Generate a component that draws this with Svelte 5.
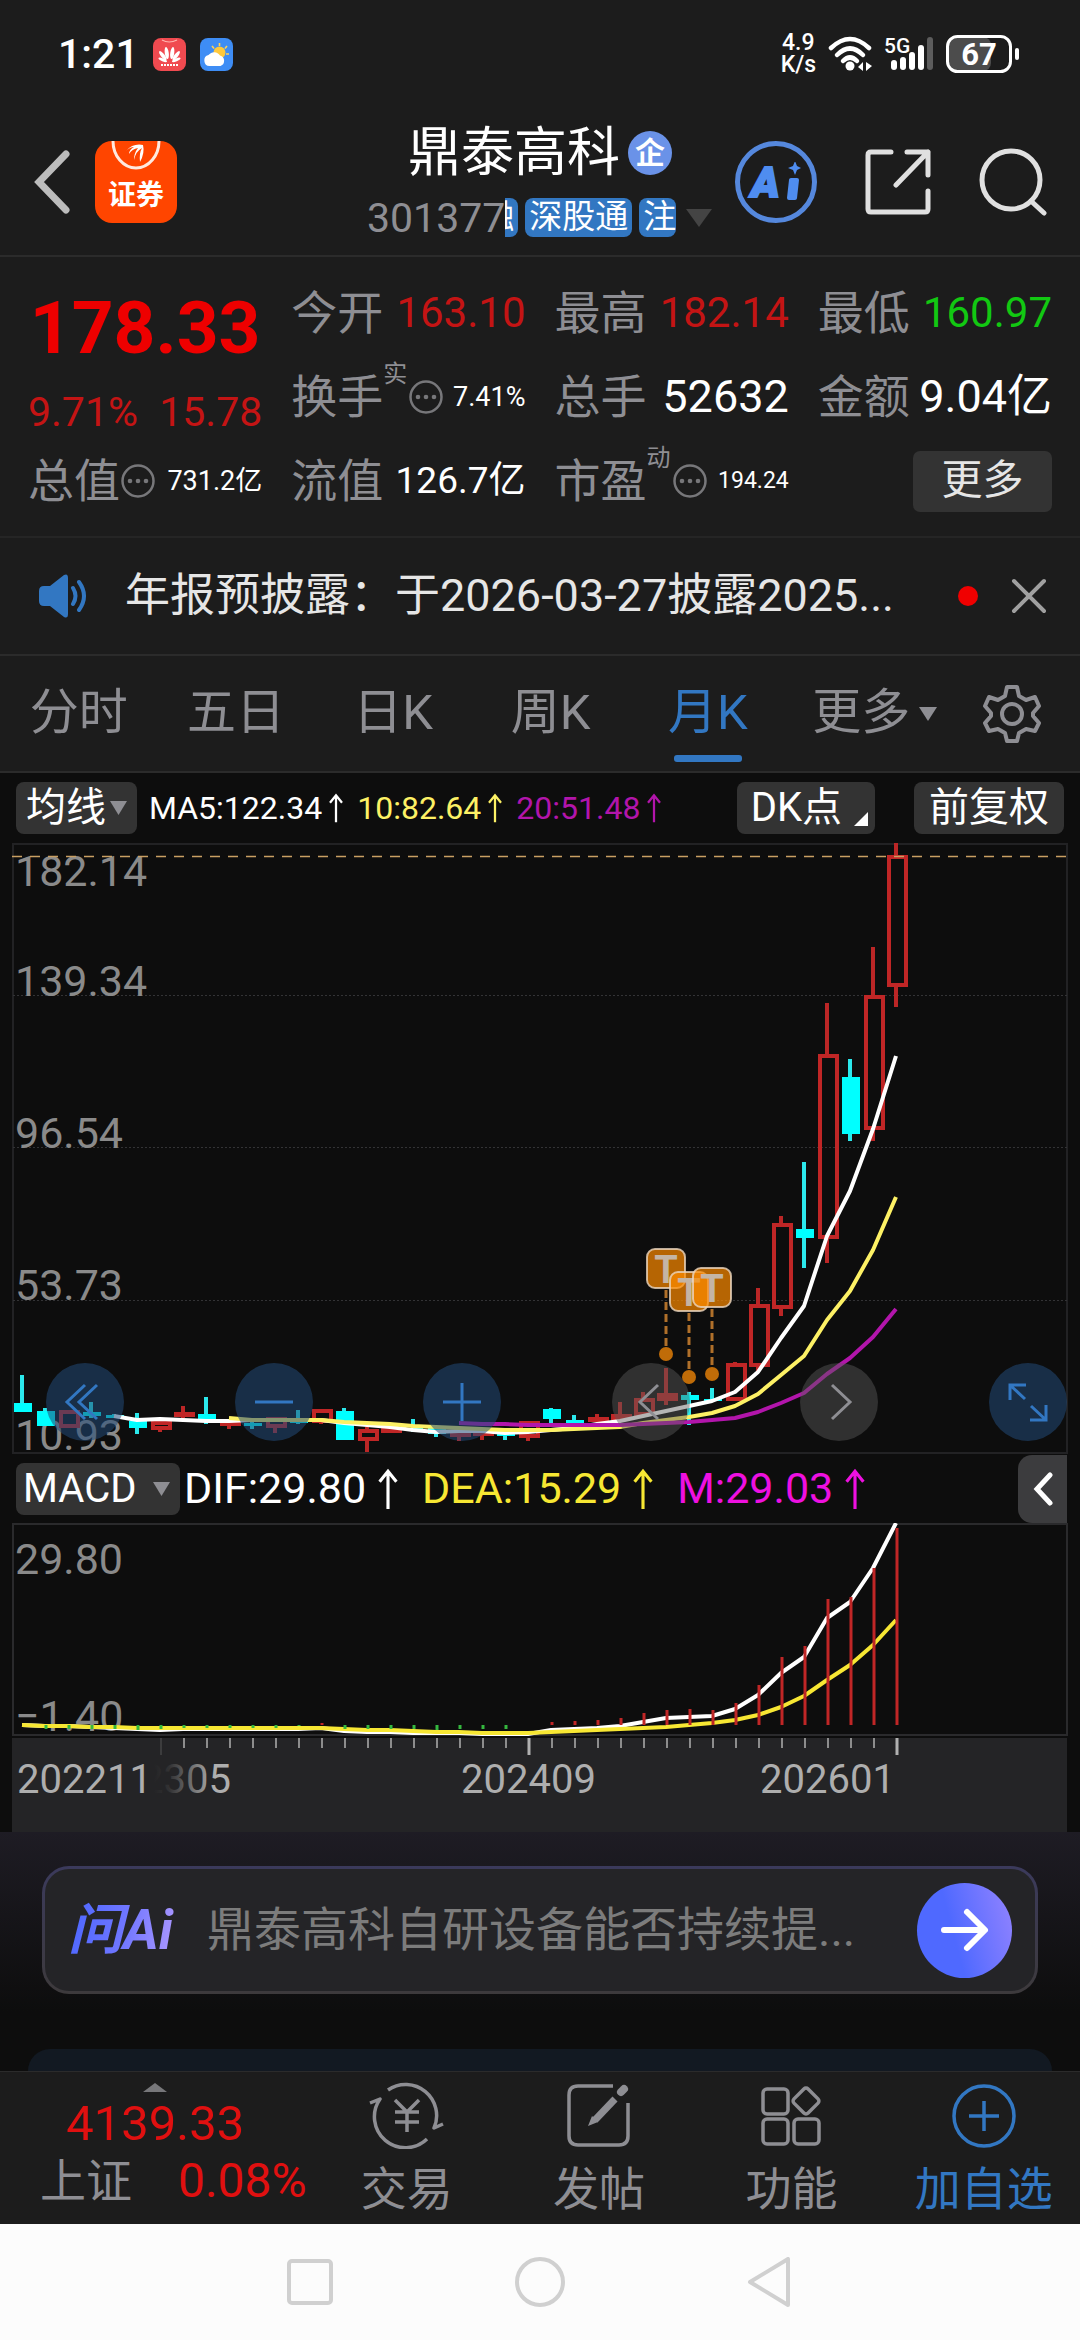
<script>
  const STEP = 23;
  const X0 = 22;
  const cx = (i) => X0 + STEP * i;

  // [direction, high, bodyTop, bodyBottom, low] in chart units
  const candles = [
    ['d', 532, 560, 569, 569], ['d', 565, 568, 583, 583], ['u', 567, 567, 585, 585],
    ['d', 559, 569, 573, 575], ['d', 571, 572, 575, 575], ['d', 570, 578, 585, 591],
    ['u', 578, 578, 587, 589], ['u', 563, 569, 574, 575], ['d', 554, 571, 577, 581],
    ['u', 577, 578, 582, 586], ['d', 578, 580, 583, 586], ['u', 574, 574, 585, 590],
    ['d', 567, 578, 580, 581], ['u', 566, 566, 580, 581], ['d', 565, 568, 597, 597],
    ['u', 584, 586, 598, 609], ['u', 585, 585, 589, 589], ['d', 576, 585, 587, 589],
    ['d', 583, 585, 591, 594], ['u', 586, 587, 594, 598], ['u', 586, 588, 591, 597],
    ['d', 588, 590, 593, 597], ['u', 578, 578, 595, 598], ['d', 565, 566, 576, 581],
    ['d', 572, 577, 580, 581], ['u', 571, 574, 579, 579], ['u', 559, 571, 577, 577],
    ['u', 549, 555, 573, 573], ['u', 525, 550, 558, 562], ['d', 549, 552, 557, 582],
    ['d', 545, 556, 558, 558], ['u', 519, 520, 558, 558], ['u', 445, 461, 524, 529],
    ['u', 373, 380, 466, 473], ['d', 319, 386, 395, 425], ['u', 160, 211, 396, 420],
    ['d', 216, 234, 291, 298], ['u', 104, 152, 287, 298], ['u', 0, 12, 144, 164]
  ];

  const line = (start, ys) => ys.map((y, k) => `${cx(start + k)},${y}`).join(' ');

  const ma5 = line(4, [573, 577, 576, 577, 578, 578, 577, 577, 577, 577, 580, 582, 584, 587, 589, 588, 588, 590, 589, 587, 585, 581, 578, 573, 568, 563, 558, 549, 529, 495, 463, 393, 348, 286, 213]);
  const ma10 = line(9, [575, 577, 577, 577, 577, 579, 580, 581, 583, 584, 585, 586, 587, 587, 587, 586, 585, 584, 580, 577, 574, 570, 563, 551, 532, 513, 477, 448, 407, 354]);
  const ma20 = line(19, [580, 581, 581, 582, 582, 582, 582, 582, 581, 580, 579, 577, 575, 569, 560, 550, 531, 515, 494, 466]);

  const dif = line(0, [202, 203, 203, 204, 205, 206, 207, 206, 206, 206, 206, 206, 206, 205, 208, 209, 209, 210, 210, 210, 211, 211, 211, 207, 206, 205, 203, 199, 195, 194, 193, 186, 172, 150, 134, 95, 79, 45, 0]);
  const dea = line(0, [202, 203, 203, 204, 204, 205, 205, 205, 205, 205, 205, 205, 205, 205, 206, 207, 207, 208, 209, 209, 210, 210, 210, 209, 208, 207, 206, 205, 204, 202, 200, 197, 192, 184, 173, 157, 142, 122, 97]);

  const bars = [
    [13, 200], [23, 199], [24, 198], [25, 197], [26, 195], [27, 190], [28, 187], [29, 186], [30, 187],
    [31, 180], [32, 162], [33, 134], [34, 123], [35, 76], [36, 74], [37, 45], [38, 5]
  ];
  const dips = [
    [1, 4], [2, 4], [3, 4], [4, 4], [5, 5], [6, 4], [7, 3], [8, 3], [9, 3], [10, 3], [11, 3], [12, 1],
    [14, 4], [15, 4], [16, 4], [17, 4], [18, 5], [19, 4], [20, 4], [21, 4]
  ];
  const ticks = Array.from({ length: 33 }, (_, k) => k + 6);

  const prices = [['182.14', 43], ['139.34', 153], ['96.54', 305], ['53.73', 457], ['10.93', 607]];
  const marks = [[28, 406, 511], [29, 429, 534], [30, 425, 531]];
  const tabs = ['分时', '五日', '日K', '周K', '月K'];
</script>

{#snippet up()}
  <svg class="up" viewBox="0 0 20 40" aria-hidden="true"><path d="M10 39V3M2 13l8-10 8 10" /></svg>
{/snippet}

{#snippet dots()}
  <svg class="dots" viewBox="0 0 36 36" aria-hidden="true">
    <circle cx="18" cy="18" r="15.5" fill="none" stroke="#77777a" stroke-width="2.5" />
    <circle cx="10" cy="18" r="2.3" /><circle cx="18" cy="18" r="2.3" /><circle cx="26" cy="18" r="2.3" />
  </svg>
{/snippet}

<div class="screen">
  <div class="status">
    <span class="clock">1:21</span>
    <svg class="mini" viewBox="0 0 33 33" aria-hidden="true">
      <rect width="33" height="33" rx="8" fill="#f04a50" />
      <path d="M9 2q7 4 15 0" fill="none" stroke="#ffb5b0" stroke-width="1.2" />
      <g fill="#fff">
        <ellipse cx="14.6" cy="15" rx="2" ry="6" transform="rotate(-8 14.6 21)" />
        <ellipse cx="18.4" cy="15" rx="2" ry="6" transform="rotate(8 18.4 21)" />
        <ellipse cx="13.4" cy="16" rx="1.9" ry="5.6" transform="rotate(-38 14 22)" />
        <ellipse cx="19.6" cy="16" rx="1.9" ry="5.6" transform="rotate(38 19 22)" />
        <ellipse cx="12.6" cy="18" rx="1.5" ry="4.6" transform="rotate(-68 14 22)" />
        <ellipse cx="20.4" cy="18" rx="1.5" ry="4.6" transform="rotate(68 19 22)" />
      </g>
      <path d="M8 27h17" stroke="#fff" stroke-width="2" stroke-dasharray="2 1" />
    </svg>
    <svg class="mini" viewBox="0 0 33 33" aria-hidden="true">
      <rect width="33" height="33" rx="8" fill="#3e8df5" />
      <path d="M19.500 5v3M12 8l2 2.500M27 8l-2 2.500M26 16h3" stroke="#ffd257" stroke-width="1.6" />
      <circle cx="19.500" cy="14.500" r="6" fill="#ffc93c" />
      <path d="M9.500 28a5.600 5.600 0 0 1-1-11 7 7 0 0 1 11.500 0.500 5.500 5.500 0 0 1 0.500 10.500z" fill="#fff" />
    </svg>
    <span class="speed">4.9<br />K/s</span>
    <svg class="wifi" viewBox="0 0 46 36" aria-hidden="true">
      <g fill="none" stroke="#fff" stroke-width="4.500" stroke-linecap="round">
        <path d="M3 12Q22 -6 41 12" /><path d="M9 19Q22 6 35 19" /><path d="M15 25Q22 18 29 25" />
      </g>
      <circle cx="22" cy="30" r="4.500" fill="#fff" />
      <path d="M35 26v9l-5-4zM38 26v9l6-5z" fill="#fff" />
    </svg>
    <svg class="signal" viewBox="0 0 50 36" aria-hidden="true">
      <text x="0" y="17" font-size="21" font-weight="500" fill="#fff">5G</text>
      <g stroke="#fff" stroke-width="6" stroke-linecap="round">
        <path d="M10 27v4" /><path d="M19 24v7" /><path d="M28 19v12" /><path d="M37 12v19" /><path d="M46 4v27" stroke="#5c5c5c" />
      </g>
    </svg>
    <svg class="battery" viewBox="0 0 74 38" aria-hidden="true">
      <rect x="2" y="2" width="43" height="34" rx="8" fill="#4c4c4c" />
      <rect x="1.500" y="1.500" width="63" height="35" rx="10" fill="none" stroke="#fff" stroke-width="3" />
      <path d="M71 15v8" stroke="#fff" stroke-width="4" stroke-linecap="round" />
      <text x="33" y="30" text-anchor="middle" font-size="31" font-weight="700" fill="#fff">67</text>
    </svg>
  </div>

  <header class="head">
    <div class="head-left">
      <button class="bare" aria-label="返回">
        <svg width="38" height="64" viewBox="0 0 38 64"><path d="M33 4L6 32l27 28" fill="none" stroke="#bcbcbc" stroke-width="7" stroke-linecap="round" /></svg>
      </button>
      <button class="broker" aria-label="证券">
        <svg viewBox="0 0 82 34" aria-hidden="true">
          <path d="M18 0a23 27 0 0 0 46 0" fill="none" stroke="#ffe9df" stroke-width="3" />
          <path d="M31 10Q38 2 48 4q2 8-3 17Q44 12 47 7q-6 3-8 12 0-7 4-12-6 1-9 6 0-4 5-7-4 0-8 4z" fill="#fff" />
        </svg>
        <span>证券</span>
      </button>
    </div>
    <div class="head-mid">
      <h1>鼎泰高科<span class="badge">企</span></h1>
      <div class="code">
        <span class="num">301377</span>
        <span class="chips"><b class="cut">融</b><b>深股通</b><b class="end">注</b></span>
        <svg width="26" height="18" viewBox="0 0 26 18" aria-hidden="true"><path d="M0 0h26L13 18z" fill="#444" /></svg>
      </div>
    </div>
    <div class="head-right">
      <button class="ai" aria-label="AI">
        <span>A</span>
        <svg width="16" height="40" viewBox="0 0 16 40" aria-hidden="true"><path d="M10 -1l2 5 4 2-4 2-2 5-2-5-5-2 5-2z" fill="#4f8df0" /><path d="M6 18h6l-2 18H4z" fill="#4f8df0" stroke="#4f8df0" stroke-width="4" stroke-linejoin="round" /></svg>
      </button>
      <button class="bare" aria-label="分享">
        <svg width="66" height="66" viewBox="0 0 66 66"><path d="M26 3H6q-3 0-3 3v54q0 3 3 3h54q3 0 3-3V42M42 3h21v23M63 3L31 36" fill="none" stroke="#e0e0e0" stroke-width="5" stroke-linecap="round" stroke-linejoin="round" /></svg>
      </button>
      <button class="bare" aria-label="搜索">
        <svg width="68" height="68" viewBox="0 0 68 68"><circle cx="32" cy="32" r="29" fill="none" stroke="#e0e0e0" stroke-width="5" /><path d="M52 53l13 12" stroke="#e0e0e0" stroke-width="5" stroke-linecap="round" /></svg>
      </button>
    </div>
  </header>

  <section class="quote">
    <div class="last">
      <strong>178.33</strong>
      <div><span>9.71%</span><span>15.78</span></div>
    </div>
    <div class="cell"><span class="lab">今开</span><span class="val red">163.10</span></div>
    <div class="cell"><span class="lab">最高</span><span class="val red">182.14</span></div>
    <div class="cell"><span class="lab">最低</span><span class="val green">160.97</span></div>
    <div class="cell"><span class="lab">换手<sup>实</sup></span>{@render dots()}<span class="val small">7.41%</span></div>
    <div class="cell"><span class="lab">总手</span><span class="val big">52632</span></div>
    <div class="cell"><span class="lab">金额</span><span class="val big">9.04亿</span></div>
    <div class="cell"><span class="lab">总值</span>{@render dots()}<span class="val small">731.2亿</span></div>
    <div class="cell"><span class="lab">流值</span><span class="val mid">126.7亿</span></div>
    <div class="cell"><span class="lab">市盈<sup>动</sup></span>{@render dots()}<span class="val tiny">194.24</span></div>
    <div class="cell right"><button class="more">更多</button></div>
  </section>

  <section class="notice">
    <svg width="50" height="44" viewBox="0 0 50 44" aria-hidden="true">
      <path d="M0 17q0-5 5-5h6L25 1q4-2 4 3v36q0 5-4 3L11 32H5q-5 0-5-5z" fill="#3277c2" />
      <path d="M34 14q5 8 0 16M40 8q10 14 0 28" fill="none" stroke="#3277c2" stroke-width="4" stroke-linecap="round" />
    </svg>
    <a href="#notice">年报预披露：于2026-03-27披露2025...</a>
    <i></i>
    <button class="bare" aria-label="关闭">
      <svg width="36" height="36" viewBox="0 0 36 36"><path d="M3 3l30 30M33 3L3 33" stroke="#a0a0a0" stroke-width="4" stroke-linecap="round" /></svg>
    </button>
  </section>

  <nav class="tabs">
    {#each tabs as t}
      <button class:on={t === '月K'}>{t}</button>
    {/each}
    <button>更多<svg width="18" height="14" viewBox="0 0 18 14" aria-hidden="true"><path d="M0 0h18L9 14z" fill="#8e8e93" /></svg></button>
    <button aria-label="设置">
      <svg width="60" height="60" viewBox="0 0 60 60" fill="none" stroke="#8e8e93" stroke-width="4" stroke-linejoin="round">
        <path d="M25 3h10l2 9 7 4 9-3 4 9-6 7v3l6 7-4 8-9-2-7 4-2 8H25l-2-8-7-4-9 2-4-8 6-7v-3l-6-7 4-9 9 3 7-4z" />
        <circle cx="30" cy="30" r="10" />
      </svg>
    </button>
  </nav>

  <section class="charts">
    <div class="bar">
      <button class="pill">均线<svg width="17" height="14" viewBox="0 0 17 14" aria-hidden="true"><path d="M0 0h17L8.500 14z" fill="#8e8e93" /></svg></button>
      <span class="ma white">MA5:122.34{@render up()}</span>
      <span class="ma yellow">10:82.64{@render up()}</span>
      <span class="ma purple">20:51.48{@render up()}</span>
      <button class="pill dk">DK点<svg width="14" height="14" viewBox="0 0 14 14" aria-hidden="true"><path d="M14 0v14H0z" fill="#fff" /></svg></button>
      <button class="pill adj">前复权</button>
    </div>

    <div class="plot">
      <svg viewBox="0 0 1080 611" role="img" aria-label="月K线">
        <g fill="none" stroke="#222224" stroke-width="2"><rect x="13" y="1" width="1054" height="609" /></g>
        <g stroke="#333335" stroke-width="1" stroke-dasharray="2 2"><path d="M13 152.500H1067M13 304.500H1067M13 457.500H1067" /></g>
        {#each prices as [p, y]}
          <text x="15" {y} class="axis">{p}</text>
        {/each}
        {#each candles as [d, hi, top, bot, lo], i}
          {#if d === 'd'}
            <path d="M{cx(i)} {hi}V{lo}" stroke="#2be8ec" stroke-width="4" />
            <rect x={cx(i) - 8} y={top} width="18" height={bot - top} fill="#00ffff" />
          {:else}
            <path d="M{cx(i)} {hi}V{top + 1}M{cx(i)} {bot - 1}V{lo}" stroke="#bb2626" stroke-width="4" />
            <rect x={cx(i) - 7} y={top + 2} width="17" height={Math.max(bot - top - 4, 1)} fill="none" stroke="#c02626" stroke-width="4" />
          {/if}
        {/each}
        <g fill="none" stroke-width="4" stroke-linejoin="round">
          <polyline points={ma5} stroke="#ffffff" />
          <polyline points={ma10} stroke="#fdf165" />
          <polyline points={ma20} stroke="#b215ab" />
        </g>
        <path d="M12 13.500H1067" stroke="#c9a063" stroke-width="1.5" stroke-dasharray="10 8" />
        {#each marks as [i, y, end]}
          <path d="M{cx(i)} {y + 41}V{end}" stroke="#b0702a" stroke-width="3" stroke-dasharray="8 4" />
          <circle cx={cx(i)} cy={end} r="7" fill="#c06c08" />
          <rect x={cx(i) - 19} {y} width="38" height="39" rx="8" fill="#ff8c00" fill-opacity=".7" stroke="#ead6c0" stroke-opacity=".8" stroke-width="2" />
          <text x={cx(i)} y={y + 34} class="tee">T</text>
        {/each}
      </svg>
      <div class="tools">
        <button aria-label="更早"><svg viewBox="0 0 78 78"><path d="M39 22L21 39l18 17M51 22L33 39l18 17" /></svg></button>
        <button aria-label="缩小"><svg viewBox="0 0 78 78"><path d="M20 39h38" /></svg></button>
        <button aria-label="放大"><svg viewBox="0 0 78 78"><path d="M20 39h38M39 20v38" /></svg></button>
        <button class="gray" aria-label="左移"><svg viewBox="0 0 78 78"><path d="M46 22L28 39l18 17" /></svg></button>
        <button class="gray" aria-label="右移"><svg viewBox="0 0 78 78"><path d="M32 22l18 17-18 17" /></svg></button>
        <button aria-label="全屏"><svg viewBox="0 0 78 78"><path d="M36 36L21 22M21 37V22h16M42 43l15 14M57 42v15H41" /></svg></button>
      </div>
    </div>

    <div class="bar macd">
      <button class="pill">MACD<svg width="17" height="14" viewBox="0 0 17 14" aria-hidden="true"><path d="M0 0h17L8.500 14z" fill="#8e8e93" /></svg></button>
      <span class="ind white">DIF:29.80{@render up()}</span>
      <span class="ind dea">DEA:15.29{@render up()}</span>
      <span class="ind mag">M:29.03{@render up()}</span>
      <button class="fold" aria-label="展开"><svg width="20" height="34" viewBox="0 0 20 34"><path d="M17 3L4 17l13 14" fill="none" stroke="#fff" stroke-width="5" stroke-linecap="round" /></svg></button>
    </div>

    <svg class="macd-plot" viewBox="0 0 1080 309" role="img" aria-label="MACD">
      <defs>
        <linearGradient id="fade"><stop offset="0" stop-color="#242426" /><stop offset=".25" stop-color="#242426" stop-opacity=".9" /><stop offset="1" stop-color="#242426" stop-opacity="0" /></linearGradient>
      </defs>
      <rect x="13" y="1" width="1054" height="211" fill="none" stroke="#2a2a2c" stroke-width="2" />
      <text x="15" y="51" class="axis">29.80</text>
      <text x="15" y="208" class="axis">−1.40</text>
      <polyline points={dif} fill="none" stroke="#fff" stroke-width="4" stroke-linejoin="round" />
      <polyline points={dea} fill="none" stroke="#f7e733" stroke-width="4" stroke-linejoin="round" />
      {#each bars as [i, y]}
        <path d="M{cx(i) + 1} {y}V202" stroke="#c02626" stroke-width="3" />
      {/each}
      {#each dips as [i, h]}
        <path d="M{cx(i) + 1} 202v{h}" stroke="#35b83f" stroke-width="3" />
      {/each}
      <rect x="12" y="215" width="1055" height="94" fill="#242426" />
      {#each ticks as i}
        <path d="M{cx(i) + 1} 215v{i === 6 || i === 22 || i === 38 ? 17 : 10}" stroke={i === 6 ? '#444446' : '#b0b0b0'} stroke-width={i === 22 || i === 38 ? 3 : 1.5} />
      {/each}
      <text x="96" y="270" class="date">202305</text>
      <rect x="90" y="236" width="64" height="44" fill="#242426" />
      <rect x="154" y="236" width="60" height="44" fill="url(#fade)" />
      <text x="17" y="270" class="date">202211</text>
      <text x="461" y="270" class="date">202409</text>
      <text x="760" y="270" class="date">202601</text>
    </svg>
  </section>

  <section class="ask">
    <div class="askbox">
      <span class="logo">问Ai</span>
      <a href="#ask">鼎泰高科自研设备能否持续提...</a>
      <button class="go" aria-label="发送"><svg width="50" height="46" viewBox="0 0 50 46"><path d="M4 23h40M27 5l18 18-18 18" fill="none" stroke="#fff" stroke-width="6" stroke-linecap="round" stroke-linejoin="round" /></svg></button>
    </div>
    <div class="peek"></div>
  </section>

  <footer class="dock">
    <button class="index">
      <svg width="24" height="9" viewBox="0 0 24 9" aria-hidden="true"><path d="M0 9L12 0l12 9z" fill="#77777a" /></svg>
      <span class="pts">4139.33</span>
      <span class="row"><span>上证</span><span class="pct">0.08%</span></span>
    </button>
    <button>
      <svg width="76" height="68" viewBox="0 0 76 68" fill="none" stroke="#8e8e93" stroke-width="3.500">
        <path d="M19 9A31 31 0 0 1 65 47l9-4M58 58A31 31 0 0 1 11 18L1 22" stroke-linejoin="round" />
        <path d="M26 19l12 12 12-12M38 31v20M26 31h24M26 41h24" />
      </svg>
      交易
    </button>
    <button>
      <svg width="64" height="68" viewBox="0 0 64 68" fill="none" stroke="#8e8e93" stroke-width="3.500">
        <path d="M46 5H11q-9 0-9 9v41q0 9 9 9h41q9 0 9-9V22" />
        <path d="M28 39L48 18" stroke-width="7" /><path d="M21 45l4-10 6 6z" fill="#8e8e93" stroke="none" />
        <path d="M54 11l3-3" stroke-width="8" stroke-linecap="round" />
      </svg>
      发帖
    </button>
    <button>
      <svg width="62" height="68" viewBox="0 0 62 68" fill="none" stroke="#8e8e93" stroke-width="3.500">
        <rect x="3" y="8" width="25" height="25" rx="4" /><rect x="3" y="38" width="25" height="25" rx="4" /><rect x="34" y="38" width="25" height="25" rx="4" />
        <rect x="36" y="10" width="20" height="20" rx="3" transform="rotate(45 46 20)" />
      </svg>
      功能
    </button>
    <button class="add">
      <svg width="66" height="68" viewBox="0 0 66 68" fill="none" stroke="#3277c2" stroke-width="3.500">
        <circle cx="33" cy="35" r="30" /><path d="M33 20v30M18 35h30" />
      </svg>
      加自选
    </button>
  </footer>

  <nav class="sys">
    <button class="bare" aria-label="最近"><svg width="50" height="50" viewBox="0 0 50 50"><rect x="4" y="4" width="42" height="42" rx="3" /></svg></button>
    <button class="bare" aria-label="主页"><svg width="50" height="50" viewBox="0 0 50 50"><circle cx="25" cy="25" r="23" /></svg></button>
    <button class="bare" aria-label="后退"><svg width="50" height="50" viewBox="0 0 50 50"><path d="M43 2v46L5 25z" stroke-linejoin="round" /></svg></button>
  </nav>
</div>

<style>
  :global(body) { background: #0d0d0d; }
  .screen {
    display: flex;
    flex-direction: column;
    min-height: 100vh;
    background: #1c1c1c;
    color: #e6e6e6;
    font-family: Roboto, "Noto Sans CJK SC", sans-serif;
    line-height: 1.2;
  }
  button {
    display: flex;
    align-items: center;
    justify-content: center;
    margin: 0;
    padding: 0;
    border: 0;
    background: none;
    color: inherit;
    font: inherit;
    white-space: nowrap;
  }
  svg { display: block; flex: none; }
  a { color: inherit; text-decoration: none; white-space: nowrap; }

  .status { display: flex; align-items: center; height: 108px; padding: 0 60px 0 58px; color: #fff; }
  .clock { font-size: 41px; font-weight: 500; line-height: 48px; margin-right: 14px; }
  .mini { width: 33px; height: 33px; margin-right: 14px; }
  .speed { margin-left: auto; font-size: 23px; line-height: 22px; font-weight: 500; text-align: center; }
  .wifi { width: 46px; height: 36px; margin: 0 10px 0 12px; }
  .signal { width: 50px; height: 36px; margin-right: 12px; }
  .battery { width: 74px; height: 38px; }

  .head {
    display: grid;
    grid-template-columns: 1fr 346px 1fr;
    align-items: center;
    height: 147px;
    border-bottom: 2px solid #2b2b2b;
  }
  .head-left { display: flex; align-items: center; gap: 24px; padding-left: 33px; }
  .broker { flex-direction: column; justify-content: flex-start; width: 82px; height: 82px; border-radius: 17px; background: #ff4500; overflow: hidden; }
  .broker svg { width: 82px; height: 34px; }
  .broker span { font-family: "Noto Sans CJK SC", sans-serif; font-size: 28px; font-weight: 700; line-height: 36px; color: #fff; }
  .head-mid { display: flex; flex-direction: column; align-items: center; }
  h1 { display: flex; align-items: center; gap: 8px; margin: 0; font-size: 53px; font-weight: 400; line-height: 72px; color: #fff; }
  .badge { width: 44px; height: 44px; border-radius: 50%; background: #6a92e8; font-size: 30px; font-weight: 700; line-height: 43px; text-align: center; }
  .code { display: flex; align-items: center; width: 346px; height: 58px; }
  .num { font-size: 41px; color: #8e8e93; line-height: 48px; }
  .chips { display: flex; gap: 7px; width: 173px; margin-right: 8px; overflow: hidden; }
  .chips b { flex: none; height: 39px; padding: 0 4px; border-radius: 8px; background: #3277c2; color: #fff; font-size: 33px; font-weight: 400; line-height: 38px; }
  .chips .cut { display: flex; justify-content: flex-end; width: 9px; overflow: hidden; border-radius: 0 8px 8px 0; padding-left: 0; }
  .chips .end { padding-right: 0; }
  .head-right { display: flex; align-items: center; justify-content: space-between; padding: 0 33px 0 22px; }
  .ai { gap: 5px; width: 82px; height: 82px; box-sizing: border-box; border: 5px solid #5588dd; border-radius: 50%; color: #4f8df0; }
  .ai span { font-size: 43px; font-weight: 900; font-style: italic; line-height: 44px; -webkit-text-stroke: 2px #4f8df0; }

  .quote {
    display: grid;
    grid-template-columns: repeat(4, minmax(0, 1fr));
    grid-auto-rows: 84px;
    column-gap: 29px;
    padding: 14px 28px 13px;
    border-bottom: 2px solid #252525;
  }
  .last { grid-row: span 2; display: flex; flex-direction: column; }
  .last strong { font-size: 73px; line-height: 114px; color: #ee0000; text-align: center; }
  .last div { display: flex; justify-content: space-between; font-size: 41px; line-height: 54px; color: #c41414; }
  .cell { display: flex; align-items: center; min-width: 0; white-space: nowrap; }
  .lab { position: relative; font-size: 46px; line-height: 60px; color: #8e8e93; }
  sup { position: absolute; left: 100%; top: -8px; font-size: 24px; line-height: 30px; }
  .dots { width: 36px; height: 36px; fill: #77777a; }
  .lab:has(sup) + .dots { margin-left: 25px; }
  .val { margin-left: auto; font-size: 42px; color: #fff; }
  .red { color: #c41414; }
  .green { color: #12c812; }
  .big { font-size: 45px; }
  .mid { font-size: 37px; }
  .small { font-size: 27px; }
  .tiny { font-size: 23px; }
  .right { justify-content: flex-end; }
  .more { width: 139px; height: 61px; border-radius: 7px; background: #333; font-size: 41px; }

  .notice { display: flex; align-items: center; height: 116px; padding: 0 33px 0 39px; border-bottom: 2px solid #2b2b2b; font-size: 45px; }
  .notice a { flex: 1; margin-left: 36px; line-height: 60px; }
  .notice i { width: 20px; height: 20px; margin-right: 33px; border-radius: 50%; background: #f00000; }

  .tabs { display: grid; grid-template-columns: repeat(5, 157fr) 176fr 98fr; height: 115px; padding-right: 19px; border-bottom: 2px solid #2b2b2b; color: #8e8e93; font-size: 49px; }
  .tabs button { position: relative; gap: 9px; }
  .on { color: #3277c2; }
  .on::after { content: ""; position: absolute; bottom: 9px; width: 68px; height: 7px; border-radius: 3px; background: #3277c2; }

  .charts { background: #0d0d0d; }
  .bar { display: flex; align-items: center; height: 70px; padding: 0 16px; }
  .pill { height: 52px; padding: 0 12px; border-radius: 8px; background: #333; color: #fff; font-size: 40px; gap: 6px; }
  .bar .pill:first-child { padding: 0 10px; gap: 4px; }
  .ma { display: flex; align-items: center; margin-left: 12px; font-size: 32px; }
  .up { width: 18px; height: 30px; margin-left: 5px; fill: none; stroke: currentColor; stroke-width: 3; }
  .ind .up { width: 26px; height: 42px; margin-left: 9px; }
  .white { color: #fff; }
  .yellow { color: #fdf165; }
  .purple { color: #b215ab; }
  .dea { color: #f7e733; }
  .mag { color: #ee10e0; }
  .dk { margin: 0 39px 0 auto; padding: 0 7px 0 14px; gap: 12px; }
  .adj { width: 150px; }
  .dk svg { align-self: flex-end; margin-bottom: 8px; }
  .plot { position: relative; }
  .plot > svg, .macd-plot { width: 100%; height: auto; }
  .axis { font-size: 43px; fill: #8a8a8a; }
  .date { font-size: 40px; fill: #aeaeae; }
  .tee { font-size: 38px; font-weight: 700; fill: #c4b5a5; text-anchor: middle; }
  .tools { position: absolute; left: 46px; right: 13px; bottom: 13px; display: flex; justify-content: space-between; }
  .tools button { width: 78px; height: 78px; border-radius: 50%; background: rgba(35, 75, 120, .55); }
  .tools svg { width: 78px; height: 78px; fill: none; stroke: #3277c2; stroke-width: 3; }
  .tools .gray { background: rgba(90, 90, 90, .45); }
  .tools .gray svg { stroke: #8e8e93; }
  .macd { height: 69px; padding-right: 13px; }
  .macd .pill { width: 164px; box-sizing: border-box; justify-content: space-between; }
  .bar.macd .pill:first-child { padding-left: 7px; }
  .ind { display: flex; align-items: center; margin-right: 21px; font-size: 43px; white-space: nowrap; }
  .macd .pill + .ind { margin-left: 4px; }
  .fold { width: 49px; height: 68px; margin-left: auto; border-radius: 14px 0 0 14px; background: #3c3c3e; }

  .ask { flex: 1; display: flex; flex-direction: column; padding: 34px 28px 0; background: linear-gradient(#1e1c24, #0d0d0d 75%); }
  .askbox {
    display: flex;
    align-items: center;
    height: 122px;
    margin: 0 14px;
    padding: 0 23px;
    border: 3px solid transparent;
    border-radius: 27px;
    background: linear-gradient(#242427, #242427) padding-box, linear-gradient(#3b3a5c, #3d3a3c) border-box;
  }
  .logo { padding-right: 6px; font-size: 55px; font-weight: 700; font-style: italic; line-height: 66px; color: transparent; background: linear-gradient(100deg, #4a66ff, #6f76ff 50%, #b49cff); background-clip: text; }
  .askbox a { flex: 1; margin-left: 28px; font-size: 47px; line-height: 60px; color: #7c7c7c; }
  .go { width: 95px; height: 95px; border-radius: 50%; background: linear-gradient(75deg, #4f69ff 40%, #9484ff); }
  .peek { flex: 1; min-height: 22px; margin-top: 55px; border-radius: 54px 54px 0 0; background: #121922; }

  .dock { display: grid; grid-template-columns: 310fr repeat(4, 192fr); height: 152px; border-top: 1px solid #2b2b2b; color: #8e8e93; font-size: 46px; }
  .dock button { flex-direction: column; justify-content: flex-start; gap: 10px; padding-top: 9px; line-height: 60px; }
  .dock .index { gap: 0; padding: 11px 0 0; }
  .pts { color: #e01010; font-size: 49px; line-height: 64px; }
  .row { display: flex; gap: 46px; line-height: 50px; padding-left: 36px; }
  .pct { color: #e01010; font-size: 48px; }
  .dock .add { color: #3277c2; }

  .sys { display: flex; align-items: center; justify-content: center; gap: 180px; height: 116px; background: #fcfcfc; }
  .sys svg { fill: none; stroke: #d0d0d0; stroke-width: 4; }
</style>
